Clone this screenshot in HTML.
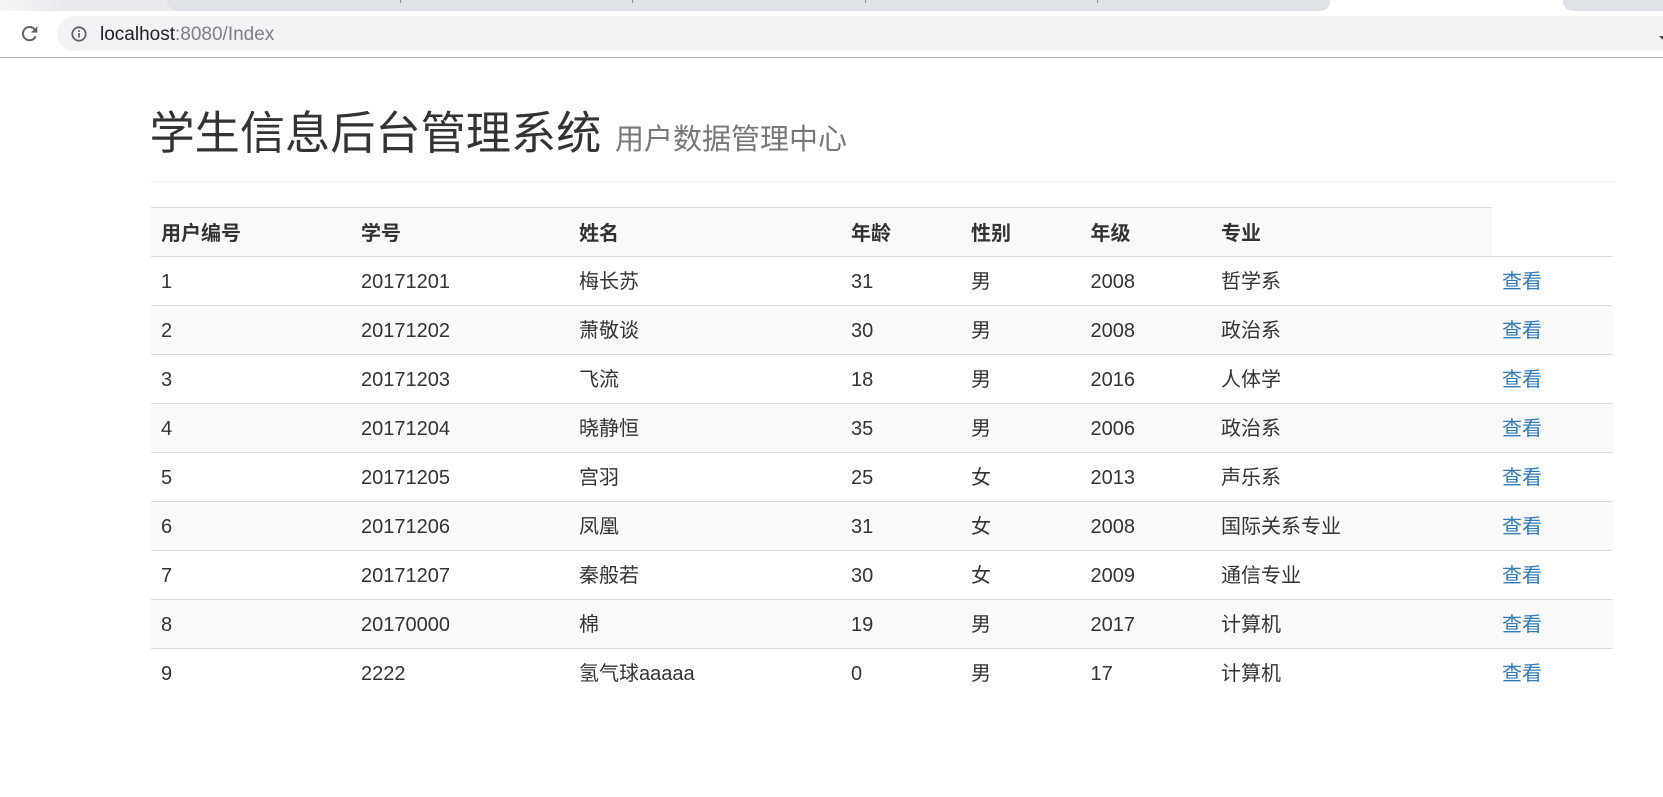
<!DOCTYPE html>
<html lang="zh">
<head>
<meta charset="utf-8">
<title>学生信息后台管理系统</title>
<style>
html,body{margin:0;padding:0;background:#fff;width:1663px;height:797px;overflow:hidden}
body{position:relative;font-family:"Liberation Sans","Noto Sans CJK SC",sans-serif;color:#333}
.abs{position:absolute}
#fade{left:0;top:0;width:180px;height:11px;background:linear-gradient(90deg,#f6f6f7 0,#e9ebee 60px,#e8eaed 100%)}
#tabs{left:167px;top:0;width:1163px;height:11px;background:#dee1e6;border-radius:0 0 10px 12px}
#tab2{left:1563px;top:0;width:100px;height:11px;background:#dee1e6;border-radius:0 0 0 10px}
.sep{top:0;width:1px;height:3px;background:#8b8f94}
#omni{left:57px;top:16px;width:1640px;height:35px;background:#f1f3f4;border-radius:17.5px}
#line{left:0;top:57px;width:1663px;height:1px;background:#b4b4b4}
#url{left:100px;top:23px;font-size:19px;line-height:24px;color:#7d8186;white-space:nowrap}
#url b{font-weight:normal;color:#202124}
h1{position:absolute;left:149.5px;top:103px;margin:0;font-size:45.2px;line-height:62px;font-weight:400;color:#333;white-space:nowrap}
h1 small{font-size:29px;color:#777;font-weight:400;margin-left:1px}
#hr{left:151px;top:181px;width:1462px;height:1px;background:#eee}
table{position:absolute;left:151px;top:207px;width:1462px;table-layout:fixed;border-collapse:separate;border-spacing:0;font-size:20px;line-height:28px}
td{padding:11px 10px 9px 10px;border-top:1px solid #ddd;text-align:left;white-space:nowrap;height:28px;box-sizing:content-box}
th{padding:12px 10px 8px 10px;border-top:1px solid #ddd;text-align:left;white-space:nowrap;height:28px;box-sizing:content-box;font-weight:700;background:#f9f9f9}
tbody tr:nth-child(even) td{background:#f9f9f9}
a{color:#337ab7;text-decoration:none}
</style>
</head>
<body>
<div class="abs" id="fade"></div>
<div class="abs" id="tabs"></div>
<div class="abs" id="tab2"></div>
<div class="abs sep" style="left:400px"></div>
<div class="abs sep" style="left:632px"></div>
<div class="abs sep" style="left:865px"></div>
<div class="abs sep" style="left:1097px"></div>
<div class="abs" id="omni"></div>
<div class="abs" id="line"></div>
<svg class="abs" style="left:20px;top:24px" width="20" height="20" viewBox="0 0 20 20">
<path d="M15.6 12.2A6.6 6.6 0 1 1 14.4 5.2" fill="none" stroke="#5f6368" stroke-width="2"/>
<path d="M17.3 2.2V8.6H10.9Z" fill="#5f6368"/>
</svg>
<svg class="abs" style="left:71px;top:26px" width="16" height="16" viewBox="0 0 16 16">
<circle cx="8" cy="8" r="6.7" fill="none" stroke="#5f6368" stroke-width="1.8"/>
<rect x="7.1" y="7" width="1.8" height="4.6" fill="#5f6368"/>
<rect x="7.1" y="4.2" width="1.8" height="1.8" fill="#5f6368"/>
</svg>
<div class="abs" id="url"><b>localhost</b>:8080/Index</div>
<svg class="abs" style="left:1659px;top:36px" width="4" height="6" viewBox="0 0 4 6"><path d="M0 0H4V4Z" fill="#444"/></svg>

<h1>学生信息后台管理系统 <small>用户数据管理中心</small></h1>
<div class="abs" id="hr"></div>

<table>
<colgroup>
<col style="width:200px"><col style="width:218px"><col style="width:272px"><col style="width:120px"><col style="width:119.5px"><col style="width:130.5px"><col style="width:281px"><col style="width:121px">
</colgroup>
<thead>
<tr><th>用户编号</th><th>学号</th><th>姓名</th><th>年龄</th><th>性别</th><th>年级</th><th>专业</th></tr>
</thead>
<tbody>
<tr><td>1</td><td>20171201</td><td>梅长苏</td><td>31</td><td>男</td><td>2008</td><td>哲学系</td><td><a href="#">查看</a></td></tr>
<tr><td>2</td><td>20171202</td><td>萧敬谈</td><td>30</td><td>男</td><td>2008</td><td>政治系</td><td><a href="#">查看</a></td></tr>
<tr><td>3</td><td>20171203</td><td>飞流</td><td>18</td><td>男</td><td>2016</td><td>人体学</td><td><a href="#">查看</a></td></tr>
<tr><td>4</td><td>20171204</td><td>晓静恒</td><td>35</td><td>男</td><td>2006</td><td>政治系</td><td><a href="#">查看</a></td></tr>
<tr><td>5</td><td>20171205</td><td>宫羽</td><td>25</td><td>女</td><td>2013</td><td>声乐系</td><td><a href="#">查看</a></td></tr>
<tr><td>6</td><td>20171206</td><td>凤凰</td><td>31</td><td>女</td><td>2008</td><td>国际关系专业</td><td><a href="#">查看</a></td></tr>
<tr><td>7</td><td>20171207</td><td>秦般若</td><td>30</td><td>女</td><td>2009</td><td>通信专业</td><td><a href="#">查看</a></td></tr>
<tr><td>8</td><td>20170000</td><td>棉</td><td>19</td><td>男</td><td>2017</td><td>计算机</td><td><a href="#">查看</a></td></tr>
<tr><td>9</td><td>2222</td><td>氢气球aaaaa</td><td>0</td><td>男</td><td>17</td><td>计算机</td><td><a href="#">查看</a></td></tr>
</tbody>
</table>
</body>
</html>
